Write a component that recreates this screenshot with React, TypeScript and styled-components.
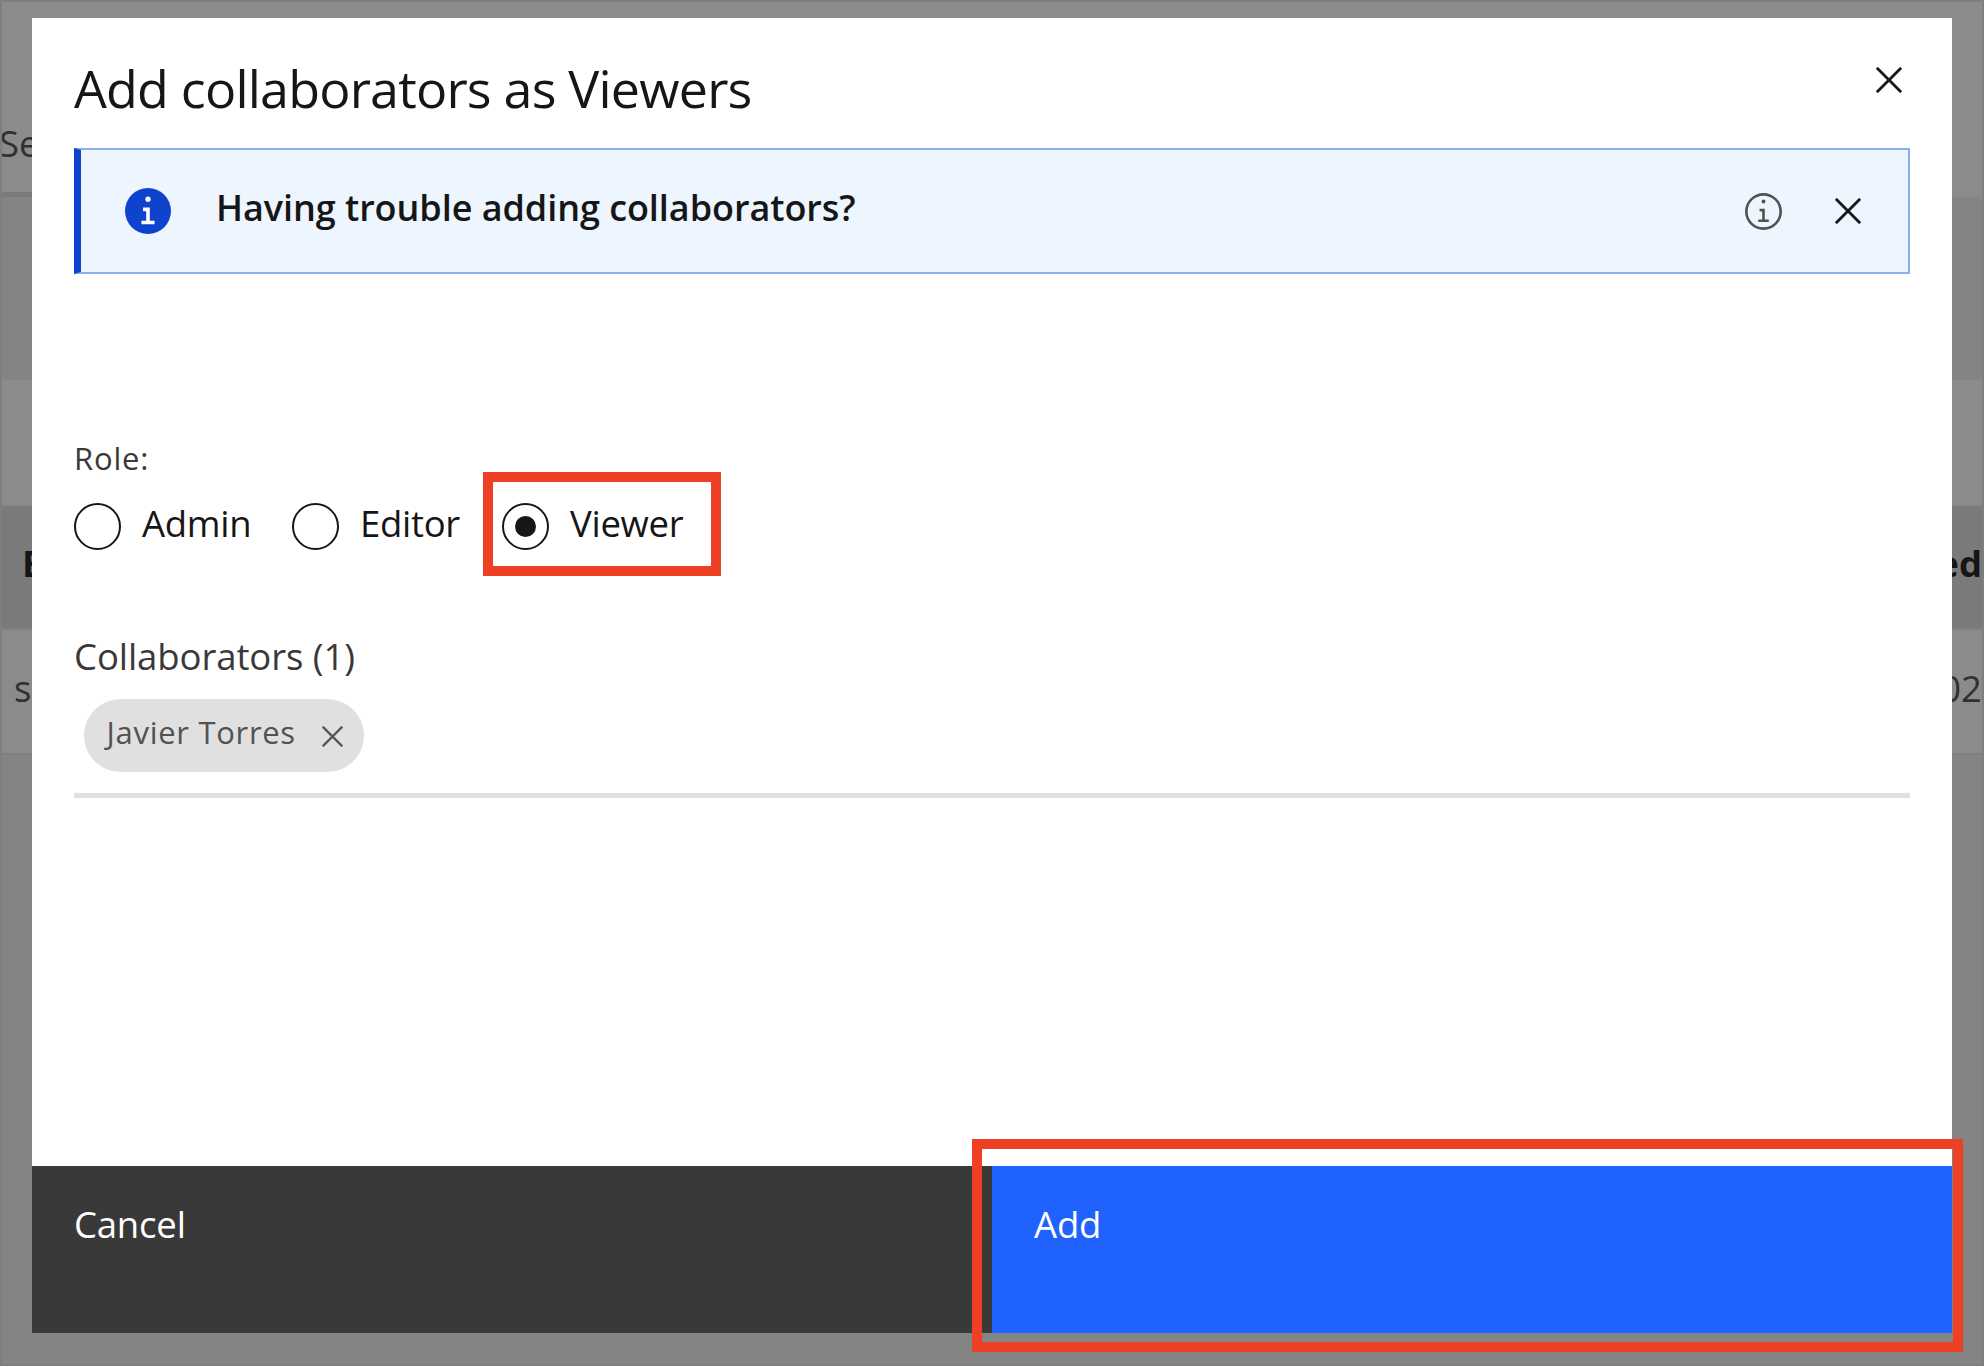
import React from 'react';
import styled, { createGlobalStyle } from 'styled-components';

const GlobalStyle = createGlobalStyle`
  *, *::before, *::after { box-sizing: border-box; }
  body { margin: 0; overflow: hidden; }
  button { font: inherit; border: 0; background: none; padding: 0; margin: 0; }
`;

const Page = styled.main`
  position: relative;
  width: 1984px;
  height: 1366px;
  border: 2px solid #7e7e7e;
  background: #848484;
  overflow: hidden;
  font-family: 'Open Sans', 'Noto Sans', sans-serif;
  font-size: 36.5px;
  color: #161616;
`;

const Backdrop = styled.div`
  display: flex;
  flex-direction: column;
  height: 100%;
`;

const Band = styled.div<{ $height: number; $color: string; $line?: string }>`
  display: flex;
  flex: none;
  justify-content: space-between;
  height: ${(p) => p.$height}px;
  background: ${(p) => p.$color};
  border-bottom: ${(p) => (p.$line ? `2px solid ${p.$line}` : '0')};
`;

const TabLine = styled.div`
  flex: none;
  width: 40px;
  height: 5px;
  background: #7b7b7b;
`;

const Peek = styled.span<{ $top: number; $left?: number; $bold?: boolean }>`
  margin-top: ${(p) => p.$top}px;
  margin-left: ${(p) => p.$left ?? 0}px;
  line-height: 50px;
  font-weight: ${(p) => (p.$bold ? 700 : 400)};
  color: ${(p) => (p.$bold ? '#161616' : '#303030')};
`;

const Modal = styled.section`
  position: absolute;
  left: 30px;
  top: 16px;
  width: 1920px;
  height: 1315px;
  display: flex;
  flex-direction: column;
  background: #fff;
`;

const Body = styled.div`
  flex: 1;
  display: flex;
  flex-direction: column;
  padding: 40px 42px 0;
`;

const Header = styled.header`
  display: flex;
  justify-content: space-between;
  align-items: flex-start;
`;

const Title = styled.h1`
  margin: 0;
  font-size: 52px;
  line-height: 60px;
  font-weight: 400;
  letter-spacing: -0.8px;
`;

const IconButton = styled.button<{ $m?: string; $color?: string }>`
  display: flex;
  margin: ${(p) => p.$m ?? '0'};
  color: ${(p) => p.$color ?? '#161616'};
`;

const Notification = styled.div`
  display: flex;
  align-items: center;
  height: 126px;
  margin-top: 30px;
  padding: 0 47px 0 44px;
  border: 2px solid #8caeef;
  border-left: 7px solid #0f43ce;
  background: #edf5ff;
  color: #161616;
`;

const NoticeText = styled.strong`
  flex: 1;
  margin-left: 45px;
  padding-bottom: 6px;
  font-size: 36px;
  font-weight: 600;
  line-height: 50px;
  letter-spacing: -0.06px;
`;

const FieldLabel = styled.div`
  margin-top: 164px;
  font-size: 31px;
  line-height: 40px;
  letter-spacing: 0.8px;
  color: #393939;
`;

const RadioRow = styled.div`
  display: flex;
  height: 47px;
  margin-top: 25px;
`;

const Radio = styled.label<{ $width: number }>`
  display: flex;
  gap: 21px;
  width: ${(p) => p.$width}px;
  line-height: 40px;
  letter-spacing: -0.3px;
  white-space: nowrap;
`;

const RadioMark = styled.span<{ $checked: boolean }>`
  flex: none;
  display: grid;
  place-items: center;
  width: 47px;
  height: 47px;
  border: 2px solid #161616;
  border-radius: 50%;
  &::after {
    content: '';
    width: 21px;
    height: 21px;
    border-radius: 50%;
    background: ${(p) => (p.$checked ? '#161616' : 'transparent')};
  }
`;

const ListTitle = styled.h2`
  margin: 81px 0 0;
  font-size: 36.5px;
  font-weight: 400;
  line-height: 50px;
  letter-spacing: -0.08px;
  color: #393939;
`;

const TagRow = styled.div`
  display: flex;
  padding: 18px 10px 21px;
  border-bottom: 5px solid #e0e0e0;
`;

const Tag = styled.span`
  display: flex;
  align-items: flex-start;
  justify-content: space-between;
  width: 280px;
  height: 73px;
  padding: 13px 21px 0 22.5px;
  border-radius: 37px;
  background: #e0e0e0;
  color: #525252;
  font-size: 31px;
  line-height: 40px;
  letter-spacing: 0.7px;
  white-space: nowrap;
`;

const Footer = styled.footer`
  flex: none;
  display: flex;
  height: 167px;
`;

const FooterButton = styled.button<{ $primary?: boolean }>`
  display: flex;
  flex: 1;
  align-items: flex-start;
  padding: 33px 42px;
  line-height: 50px;
  letter-spacing: -0.2px;
  background: ${(p) => (p.$primary ? '#1f62fe' : '#393939')};
  color: #fff;
`;

const Highlight = styled.div<{ $x: number; $y: number; $w: number; $h: number }>`
  position: absolute;
  left: ${(p) => p.$x}px;
  top: ${(p) => p.$y}px;
  width: ${(p) => p.$w}px;
  height: ${(p) => p.$h}px;
  border: 10px solid #ed4025;
  pointer-events: none;
`;

const CloseIcon = ({ size }: { size: number }) => (
  <svg
    width={size}
    height={size}
    viewBox="6 6 20 20"
    fill="currentColor"
    stroke="currentColor"
    strokeWidth="0.25"
  >
    <path d="M17.4141 16 26 7.4141 24.5859 6 16 14.5859 7.4143 6 6 7.4141 14.5859 16 6 24.5859 7.4143 26 16 17.4141 24.5859 26 26 24.5859z" />
  </svg>
);

const InfoFilledIcon = () => (
  <svg width="46" height="46" viewBox="2 2 28 28">
    <circle cx="16" cy="16" r="14" fill="#0f43ce" />
    <circle cx="16" cy="8.8" r="1.6" fill="#fff" />
    <path fill="#fff" d="M20 24.1h-8v-2.2h2.9v-5.8H13v-2.2h4.1v8H20z" />
  </svg>
);

const InfoIcon = () => (
  <svg width="37" height="37" viewBox="2 2 28 28" fill="currentColor">
    <path d="M17 22v-8h-4v2h2v6h-3v2h8v-2zM16 7a1.5 1.5 0 1 0 0 3 1.5 1.5 0 0 0 0-3z" />
    <path d="M16 30a14 14 0 1 1 14-14 14 14 0 0 1-14 14zM16 4a12 12 0 1 0 12 12A12 12 0 0 0 16 4z" />
  </svg>
);

const roles = [
  { name: 'Admin', width: 218 },
  { name: 'Editor', width: 210 },
  { name: 'Viewer', width: 190 },
];

export default function App() {
  return (
    <>
      <GlobalStyle />
      <Page>
        <Backdrop>
          <Band $height={190} $color="#8b8b8b">
            <Peek $top={116} $left={-3}>Se</Peek>
          </Band>
          <Band $height={5} $color="#8b8b8b">
            <TabLine />
          </Band>
          <Band $height={183} $color="#848484" />
          <Band $height={127} $color="#8b8b8b" $line="#808080" />
          <Band $height={123} $color="#7a7a7a" $line="#808080">
            <Peek $top={31} $left={20} $bold>E</Peek>
            <Peek $top={31} $bold>ed</Peek>
          </Band>
          <Band $height={125} $color="#8b8b8b" $line="#808080">
            <Peek $top={33} $left={12}>s</Peek>
            <Peek $top={33}>02</Peek>
          </Band>
        </Backdrop>

        <Modal role="dialog">
          <Body>
            <Header>
              <Title>Add collaborators as Viewers</Title>
              <IconButton $m="9px 8px 0 0" aria-label="Close">
                <CloseIcon size={26} />
              </IconButton>
            </Header>
            <Notification>
              <InfoFilledIcon />
              <NoticeText>Having trouble adding collaborators?</NoticeText>
              <IconButton $color="#525252" $m="0 53px 0 0" aria-label="More information">
                <InfoIcon />
              </IconButton>
              <IconButton aria-label="Dismiss">
                <CloseIcon size={26} />
              </IconButton>
            </Notification>
            <FieldLabel>Role:</FieldLabel>
            <RadioRow role="radiogroup">
              {roles.map((r) => (
                <Radio key={r.name} $width={r.width}>
                  <RadioMark $checked={r.name === 'Viewer'} />
                  {r.name}
                </Radio>
              ))}
            </RadioRow>
            <ListTitle>Collaborators (1)</ListTitle>
            <TagRow>
              <Tag>
                Javier Torres
                <IconButton $m="14px 0 0" $color="#525252" aria-label="Remove">
                  <CloseIcon size={21} />
                </IconButton>
              </Tag>
            </TagRow>
          </Body>
          <Footer>
            <FooterButton>Cancel</FooterButton>
            <FooterButton $primary>Add</FooterButton>
          </Footer>
        </Modal>

        <Highlight $x={481} $y={470} $w={238} $h={104} />
        <Highlight $x={970} $y={1137} $w={991} $h={213} />
      </Page>
    </>
  );
}
